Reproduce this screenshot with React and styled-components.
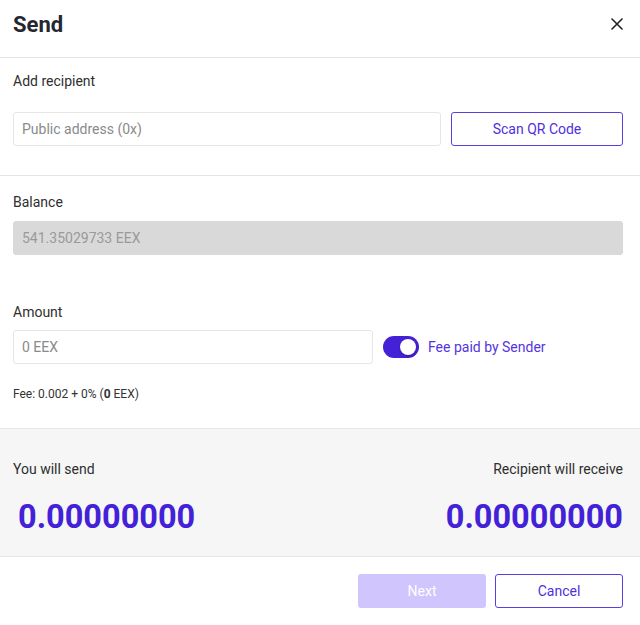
import React, { useState } from "react"
import styled, { createGlobalStyle } from "styled-components"

const GlobalStyle = createGlobalStyle`
  body {
    margin: 0;
    background: #ffffff;
    font-family: Roboto, "Liberation Sans", sans-serif;
    color: #2b2b2b;
  }
  * {
    box-sizing: border-box;
  }
`

const Modal = styled.div`
  width: 640px;
  height: 625px;
  display: flex;
  flex-direction: column;
  background: #fff;
`
const Header = styled.header`
  height: 58px;
  display: flex;
  align-items: center;
  justify-content: space-between;
  padding: 0 17px 0 13px;
  border-bottom: 1px solid #e4e4e4;
`
const Title = styled.h1`
  margin: 0;
  font-size: 22px;
  font-weight: 700;
  color: #262630;
  margin-top: -8px;
`
const CloseButton = styled.button`
  border: none;
  background: none;
  padding: 0;
  width: 12px;
  height: 12px;
  margin-top: -10px;
  cursor: pointer;
  display: flex;
`
const Section = styled.section`
  padding: ${p => p.$padding || "14px 17px 0 13px"};
  border-bottom: ${p => (p.$divider ? "1px solid #e4e4e4" : "none")};
  height: ${p => p.$height || "auto"};
`
const Label = styled.div`
  font-size: 14px;
  line-height: 16px;
  color: #2e2e2e;
`
const Row = styled.div`
  display: flex;
  align-items: center;
  gap: ${p => p.$gap || "10px"};
  margin-top: ${p => p.$top || "0"};
`
const Field = styled.input`
  height: 34px;
  flex: ${p => (p.$grow ? "1" : "none")};
  width: ${p => p.$width || "auto"};
  border: 1px solid ${p => (p.disabled ? "#d9d9d9" : "#e6e6e6")};
  border-radius: 3px;
  background: ${p => (p.disabled ? "#d9d9d9" : "#fff")};
  padding: 0 8px;
  font-family: inherit;
  font-size: 14px;
  color: #999;
  &::placeholder {
    color: #8a8a8a;
  }
`
const OutlineButton = styled.button`
  width: ${p => p.$width || "172px"};
  height: 34px;
  border: 1px solid #5a3fe0;
  border-radius: 3px;
  background: #fff;
  color: #4f30dc;
  font-family: inherit;
  font-size: 14px;
  cursor: pointer;
`
const PrimaryButton = styled.button`
  width: 128px;
  height: 34px;
  border: none;
  border-radius: 3px;
  background: #d0c6fd;
  color: #fff;
  font-family: inherit;
  font-size: 14px;
`
const Toggle = styled.button`
  width: 36px;
  height: 22px;
  border-radius: 11px;
  border: none;
  padding: 0;
  background: ${p => (p.$on ? "#4420d6" : "#bbb")};
  position: relative;
  cursor: pointer;
  &::after {
    content: "";
    position: absolute;
    top: 3px;
    left: ${p => (p.$on ? "17px" : "3px")};
    width: 16px;
    height: 16px;
    border-radius: 50%;
    background: #fff;
    box-shadow: 0 1px 2px rgba(0, 0, 0, 0.3);
  }
`
const ToggleText = styled.span`
  font-size: 14px;
  color: #5435de;
  margin-left: -1px;
`
const FeeNote = styled.div`
  font-size: 12px;
  color: #333;
  margin-top: 23px;
  b {
    font-weight: 700;
  }
`
const Summary = styled.section`
  background: #f6f6f6;
  border-top: 1px solid #e6e6e6;
  border-bottom: 1px solid #e6e6e6;
  height: 129px;
  padding: 32px 17px 0 13px;
  display: flex;
  justify-content: space-between;
`
const SummaryCol = styled.div`
  display: flex;
  flex-direction: column;
  align-items: ${p => (p.$right ? "flex-end" : "flex-start")};
`
const BigAmount = styled.div`
  font-size: 32.5px;
  font-weight: 700;
  color: #4321d8;
  margin-top: 21px;
  padding-left: ${p => (p.$right ? "0" : "5px")};
  line-height: 38px;
`
const Footer = styled.footer`
  flex: 1;
  display: flex;
  justify-content: flex-end;
  align-items: flex-start;
  gap: 9px;
  padding: 17px 17px 0 0;
`

const App = () => {
  const [feeBySender, setFeeBySender] = useState(true)

  return (
    <Modal>
      <GlobalStyle />
      <Header>
        <Title>Send</Title>
        <CloseButton aria-label="Close">
          <svg width="12" height="12" viewBox="0 0 12 12">
            <path d="M1 1L11 11M11 1L1 11" stroke="#222" strokeWidth="1.6" strokeLinecap="round" />
          </svg>
        </CloseButton>
      </Header>

      <Section $divider $height="118px" $padding="15px 17px 0 13px">
        <Label>Add recipient</Label>
        <Row $top="23px">
          <Field $grow placeholder="Public address (0x)" />
          <OutlineButton>Scan QR Code</OutlineButton>
        </Row>
      </Section>

      <Section $padding="18px 17px 0 13px">
        <Label>Balance</Label>
        <Row $top="11px">
          <Field $grow disabled value="541.35029733 EEX" readOnly />
        </Row>
      </Section>

      <Section $padding="49px 17px 0 13px" $height="173px">
        <Label>Amount</Label>
        <Row $top="10px">
          <Field $width="360px" placeholder="0 EEX" />
          <Toggle $on={feeBySender} onClick={() => setFeeBySender(!feeBySender)} />
          <ToggleText>Fee paid by Sender</ToggleText>
        </Row>
        <FeeNote>
          Fee: 0.002 + 0% (<b>0</b> EEX)
        </FeeNote>
      </Section>

      <Summary>
        <SummaryCol>
          <Label>You will send</Label>
          <BigAmount>0.00000000</BigAmount>
        </SummaryCol>
        <SummaryCol $right>
          <Label>Recipient will receive</Label>
          <BigAmount $right>0.00000000</BigAmount>
        </SummaryCol>
      </Summary>

      <Footer>
        <PrimaryButton disabled>Next</PrimaryButton>
        <OutlineButton $width="128px">Cancel</OutlineButton>
      </Footer>
    </Modal>
  )
}

export default App
